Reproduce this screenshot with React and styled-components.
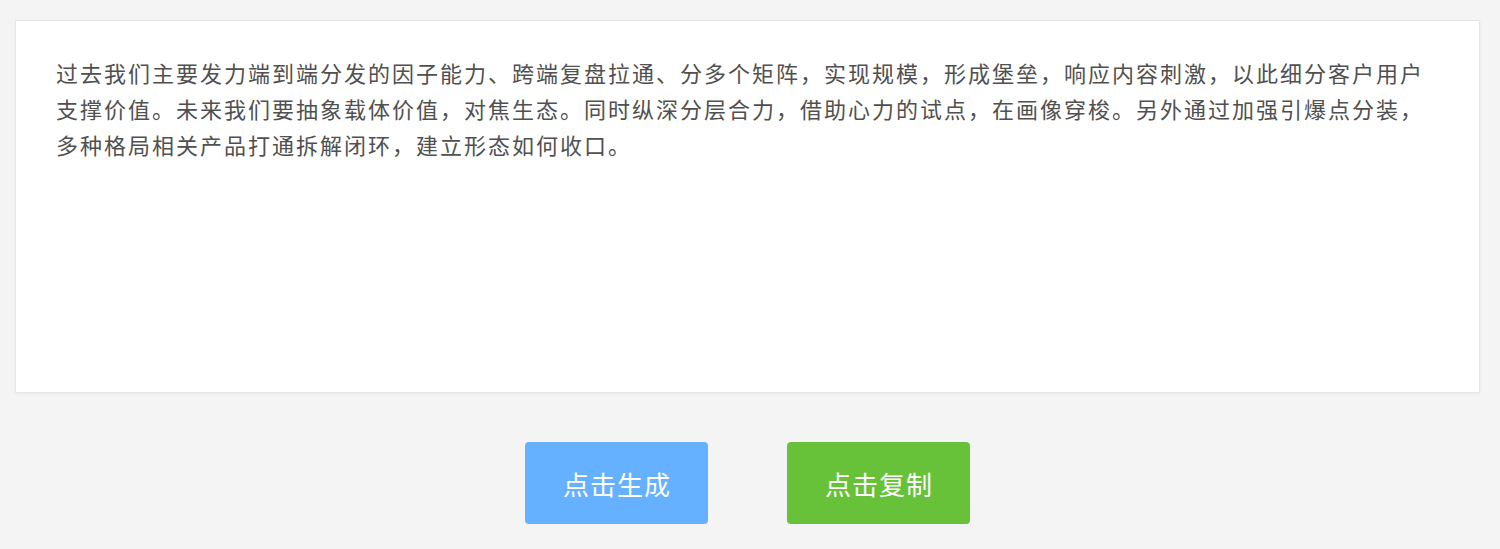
import React from "react";
import styled, { createGlobalStyle } from "styled-components";

const Global = createGlobalStyle`
  html, body { margin: 0; padding: 0; background: #f4f4f4; }
  body { font-family: "Noto Sans CJK SC", "Noto Sans", sans-serif; }
`;

const Page = styled.div`
  padding: 20px 20px 0 15px;
  display: flex;
  flex-direction: column;
  align-items: stretch;
`;

const Card = styled.div`
  background: #fff;
  border: 1px solid #e6e6e6;
  box-shadow: 0 1px 3px rgba(0, 0, 0, 0.05);
  height: 373px;
  box-sizing: border-box;
  padding: 33px 40px 0 40px;
`;

const Text = styled.p`
  margin: 0;
  font-size: 22px;
  letter-spacing: 2px;
  line-height: 36px;
  color: #505050;
`;

const Actions = styled.div`
  display: flex;
  justify-content: center;
  gap: 79px;
  margin-top: 49px;
`;

const Button = styled.button`
  width: 183px;
  height: 82px;
  border: none;
  border-radius: 4px;
  background: ${(p) => p.$bg};
  color: #fff;
  font-family: "Noto Sans CJK SC", sans-serif;
  font-size: 26px;
  letter-spacing: 1px;
  padding: 0 0 0 1px;
  cursor: pointer;
`;

export default function App() {
  return (
    <>
      <Global />
      <Page>
        <Card>
          <Text>
            过去我们主要发力端到端分发的因子能力、跨端复盘拉通、分多个矩阵，实现规模，形成堡垒，响应内容刺激，以此细分客户用户支撑价值。未来我们要抽象载体价值，对焦生态。同时纵深分层合力，借助心力的试点，在画像穿梭。另外通过加强引爆点分装，多种格局相关产品打通拆解闭环，建立形态如何收口。
          </Text>
        </Card>
        <Actions>
          <Button $bg="#66b1ff">点击生成</Button>
          <Button $bg="#67c23a">点击复制</Button>
        </Actions>
      </Page>
    </>
  );
}
